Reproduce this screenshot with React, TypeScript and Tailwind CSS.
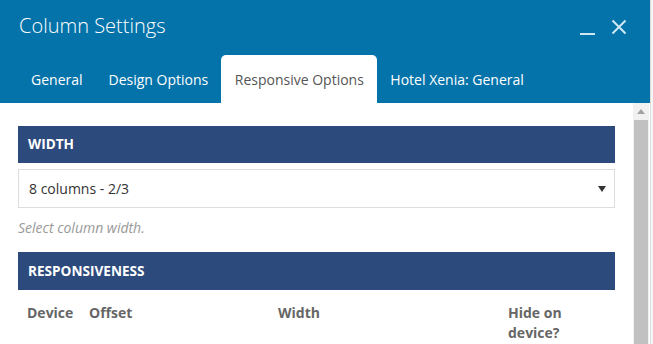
import React from 'react';

const tabs = ['General', 'Design Options', 'Responsive Options', 'Hotel Xenia: General'];

const SectionBar = ({ title }: { title: string }) => (
  <div className="h-[38px] bg-[#2c4a7c] flex items-center px-[10px] text-[13.6px] font-bold text-white">
    {title}
  </div>
);

const App = () => {
  const active = 2;

  return (
    <div className="w-[653px] h-[344px] overflow-hidden flex bg-[#f3f3f3] font-['Open_Sans',sans-serif]">
      <div className="w-[650px] h-full flex flex-col bg-white">
        {/* header */}
        <div className="h-[103px] bg-[#0473aa] flex flex-col">
          <div className="h-[55px] flex items-start justify-between pl-[19px] pr-[23px]">
            <div className="mt-[11px] text-[20px] font-light text-white">Column Settings</div>
            <div className="flex items-center gap-[15px] mt-[19px] text-[#cfe6f3]">
              <svg width="16" height="16" viewBox="0 0 16 16">
                <rect x="0" y="14" width="15" height="2" fill="currentColor" />
              </svg>
              <svg width="16" height="16" viewBox="0 0 16 16">
                <path d="M1.5 1.5 L14.5 14.5 M14.5 1.5 L1.5 14.5" stroke="currentColor" strokeWidth="2" />
              </svg>
            </div>
          </div>
          <div className="flex h-[48px] pl-[18px]">
            {tabs.map((t, i) => (
              <div
                key={t}
                className={
                  i === active
                    ? 'px-[13.5px] flex items-center bg-white rounded-t-[5px] text-[14px] text-[#555]'
                    : 'px-[13px] flex items-center text-[14px] text-white'
                }
              >
                {t}
              </div>
            ))}
          </div>
        </div>

        {/* body */}
        <div className="flex flex-1 min-h-0">
          <div className="flex-1 px-[18px] pt-[23px]">
            <div className="h-[37px] bg-[#2c4a7c] flex items-center px-[10px] text-[13.6px] font-bold text-white">
              WIDTH
            </div>
            <div className="mt-[6px] h-[39px] border border-[#ddd] flex items-center justify-between pl-[10px] pr-[8px] text-[14px] text-[#333]">
              <span>8 columns - 2/3</span>
              <svg width="8" height="6" viewBox="0 0 8 6">
                <path d="M0 0 H8 L4 6 Z" fill="#333" />
              </svg>
            </div>
            <div className="mt-[9px] text-[14px] italic text-[#999]">Select column width.</div>
            <div className="mt-[14px]">
              <SectionBar title="RESPONSIVENESS" />
            </div>
            <div className="flex pt-[13px] text-[14px] font-bold text-[#666] leading-[20px]">
              <div className="w-[71px] pl-[9px]">Device</div>
              <div className="w-[189px]">Offset</div>
              <div className="w-[230px]">Width</div>
              <div className="w-[80px]">
                Hide on
                <br />
                device?
              </div>
            </div>
          </div>
          {/* scrollbar */}
          <div className="w-[16px] bg-[#f1f1f1] flex flex-col mr-[1px]">
            <div className="h-[17px] flex items-center justify-center">
              <svg width="8" height="5" viewBox="0 0 8 5">
                <path d="M0 5 L4 0 L8 5 Z" fill="#a3a3a3" />
              </svg>
            </div>
            <div className="flex-1 mx-[1px] bg-[#c1c1c1]" />
          </div>
        </div>
      </div>
      <div className="flex-1 border-l border-[#ddd] bg-[#f5f5f5]" />
    </div>
  );
};

export default App;
